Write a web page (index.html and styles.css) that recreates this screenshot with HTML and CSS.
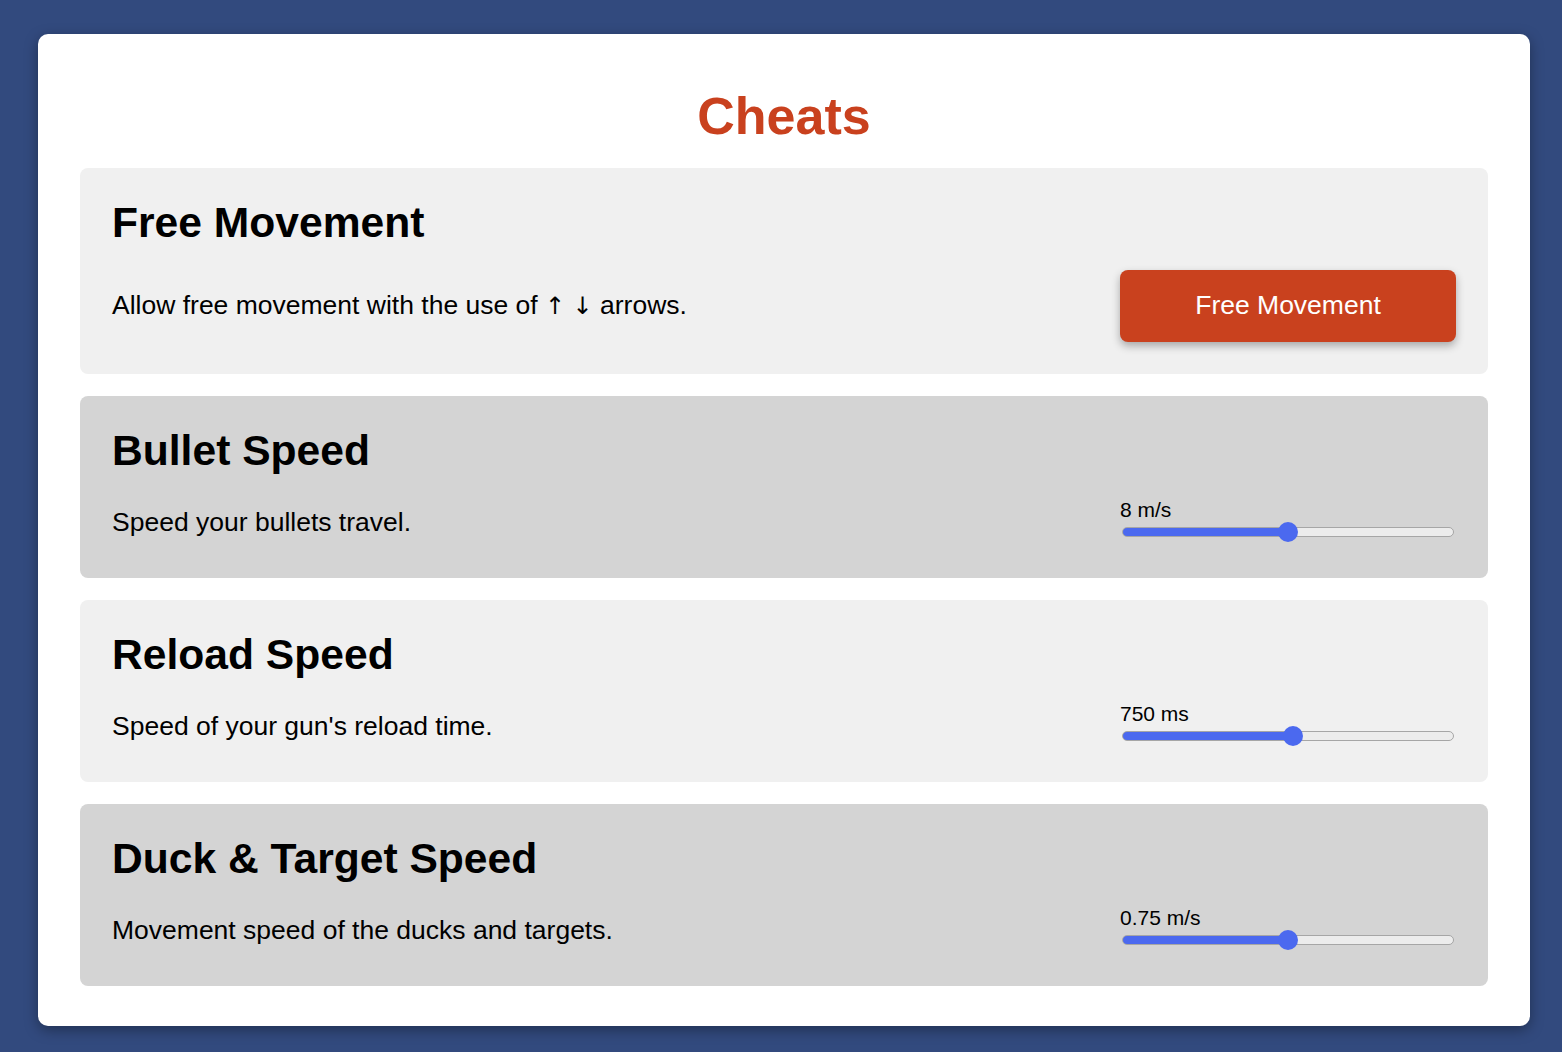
FILE: index.html
```html
<!DOCTYPE html>
<html lang="en">
<head>
<meta charset="utf-8">
<title>Cheats</title>
<link rel="stylesheet" href="styles.css">
</head>
<body>
<main class="card">
  <h1 class="title">Cheats</h1>
  <div class="list">
    <section class="cheat light">
      <h2 class="cheat-title">Free Movement</h2>
      <div class="cheat-row">
        <p class="cheat-desc">Allow free movement with the use of <span class="arrow">↑</span> <span class="arrow">↓</span> arrows.</p>
        <button class="btn">Free Movement</button>
      </div>
    </section>
    <section class="cheat dark">
      <h2 class="cheat-title">Bullet Speed</h2>
      <div class="cheat-row">
        <p class="cheat-desc">Speed your bullets travel.</p>
        <div class="control">
          <label class="control-label">8 m/s</label>
          <input class="range" type="range" min="0" max="16" value="8" style="--p: 50%">
        </div>
      </div>
    </section>
    <section class="cheat light">
      <h2 class="cheat-title">Reload Speed</h2>
      <div class="cheat-row">
        <p class="cheat-desc">Speed of your gun's reload time.</p>
        <div class="control">
          <label class="control-label">750 ms</label>
          <input class="range" type="range" min="0" max="1450" value="750" style="--p: 51.7%">
        </div>
      </div>
    </section>
    <section class="cheat dark">
      <h2 class="cheat-title">Duck &amp; Target Speed</h2>
      <div class="cheat-row">
        <p class="cheat-desc">Movement speed of the ducks and targets.</p>
        <div class="control">
          <label class="control-label">0.75 m/s</label>
          <input class="range" type="range" min="0" max="1.5" step="0.05" value="0.75" style="--p: 50%">
        </div>
      </div>
    </section>
  </div>
</main>
</body>
</html>
```

FILE: styles.css
```css
* {
  box-sizing: border-box;
}

html, body {
  margin: 0;
  padding: 0;
}

body {
  background: #324a7e;
  font-family: "Liberation Sans", Arial, Helvetica, sans-serif;
  color: #000;
  padding: 34px 32px 26px 38px;
  min-height: 1052px;
}

.card {
  background: #ffffff;
  border-radius: 10px;
  box-shadow: 0 4px 14px rgba(0, 0, 0, 0.35);
  padding: 53px 42px 40px;
}

.title {
  margin: 0 0 21px;
  text-align: center;
  color: #c9411e;
  font-size: 52px;
  font-weight: 700;
  line-height: 1.15;
}

.list {
  display: flex;
  flex-direction: column;
  gap: 22px;
}

.cheat {
  border-radius: 8px;
  padding: 30px 32px 32px;
}

.cheat.light {
  background: #f0f0f0;
}

.cheat.dark {
  background: #d4d4d4;
}

.cheat-title {
  margin: 0 0 24px;
  font-size: 42.6px;
  font-weight: 700;
  line-height: 48px;
}

.cheat-row {
  display: flex;
  align-items: center;
  justify-content: space-between;
}

.cheat-desc {
  margin: 0;
  font-size: 26.5px;
  line-height: 30px;
}

.arrow {
  font-family: "DejaVu Sans", sans-serif;
  font-size: 24px;
}

.btn {
  width: 336px;
  height: 72px;
  border: none;
  border-radius: 8px;
  background: #c9411e;
  color: #ffffff;
  font-family: "Liberation Sans", Arial, Helvetica, sans-serif;
  font-size: 26.5px;
  box-shadow: 0 4px 9px rgba(0, 0, 0, 0.3);
  cursor: pointer;
}

.control {
  width: 336px;
  display: flex;
  flex-direction: column;
}

.control-label {
  font-size: 21px;
  line-height: 24px;
}

.range {
  -webkit-appearance: none;
  appearance: none;
  margin: 0 2px 4px;
  height: 20px;
  background: transparent;
}

.range::-webkit-slider-runnable-track {
  height: 10px;
  border-radius: 5px;
  border: 1px solid #a6a6a6;
  background: linear-gradient(to right, #4b69ef 0, #4b69ef var(--p), #ececec var(--p), #ececec 100%);
}

.range::-webkit-slider-thumb {
  -webkit-appearance: none;
  appearance: none;
  width: 20px;
  height: 20px;
  border-radius: 50%;
  background: #4b69ef;
  border: none;
  margin-top: -6px;
}
```
